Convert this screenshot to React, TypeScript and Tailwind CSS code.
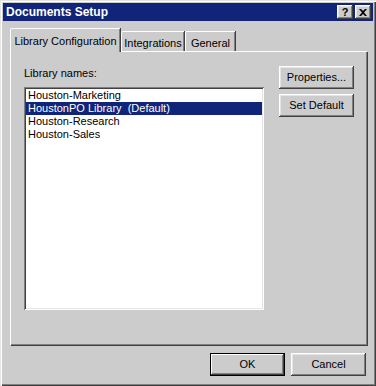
import React from 'react';

const raised =
  'shadow-[inset_-1px_-1px_#404040,inset_1px_1px_#ffffff,inset_-2px_-2px_#808080,inset_2px_2px_#e4e4e4]';
const sunken =
  'shadow-[inset_1px_1px_#808080,inset_-1px_-1px_#ffffff,inset_2px_2px_#404040,inset_-2px_-2px_#e4e4e4]';

const libraries = [
  'Houston-Marketing',
  'HoustonPO Library  (Default)',
  'Houston-Research',
  'Houston-Sales',
];

function Button({ label, primary = false }: { label: string; primary?: boolean }) {
  return (
    <button
      className={
        primary
          ? 'w-[75px] h-[23px] bg-[#cccccc] text-black border border-black shadow-[inset_-1px_-1px_#404040,inset_1px_1px_#ffffff,inset_-2px_-2px_#808080] flex items-center justify-center'
          : `w-[75px] h-[23px] bg-[#cccccc] text-black ${raised} flex items-center justify-center`
      }
    >
      {label}
    </button>
  );
}

function CaptionButton({ children }: { children: React.ReactNode }) {
  return (
    <div
      className={`w-[16px] h-[14px] bg-[#cccccc] ${raised} flex items-center justify-center text-black font-bold text-[11px] leading-none`}
    >
      {children}
    </div>
  );
}

export default function App() {
  return (
    <div className="w-[376px] h-[386px] bg-[#cccccc] p-[3px] flex flex-col font-['Liberation_Sans',Arial,sans-serif] text-[11px] text-black shadow-[inset_1px_1px_#e4e4e4,inset_2px_2px_#ffffff,inset_-1px_-1px_#404040,inset_-2px_-2px_#808080]">
      {/* Title Bar */}
      <div className="h-[18px] bg-[#10247a] flex items-center justify-between pl-[3px] pr-[2px]">
        <span className="text-white font-bold text-[12px] leading-none">Documents Setup</span>
        <div className="flex items-center gap-[2px]">
          <CaptionButton>?</CaptionButton>
          <CaptionButton>
            <svg width="8" height="7" viewBox="0 0 8 7">
              <path d="M0 0h2l2 2 2-2h2L5 3.5 8 7H6L4 5 2 7H0l3-3.5z" fill="#000" />
            </svg>
          </CaptionButton>
        </div>
      </div>

      {/* Body */}
      <div className="flex-1 flex flex-col px-[7px] pt-[7px]">
        {/* Tabs */}
        <div className="h-[23px] flex items-end">
          <div className="relative z-10 w-[110px] h-[24px] -mb-[1px] bg-[#cccccc] border-t border-l border-white rounded-tl-[2px] shadow-[inset_-1px_0_#808080,1px_0_#404040] flex items-start justify-center pt-[4px]">
            Library Configuration
          </div>
          <div className="ml-[1px] w-[63px] h-[20px] bg-[#cccccc] border-t border-l border-white rounded-tl-[2px] shadow-[inset_-1px_0_#808080,1px_0_#404040] flex items-start justify-center pt-[3px]">
            Integrations
          </div>
          <div className="ml-[1px] w-[50px] h-[20px] bg-[#cccccc] border-t border-l border-white rounded-tl-[2px] shadow-[inset_-1px_0_#808080,1px_0_#404040] flex items-start justify-center pt-[3px]">
            General
          </div>
        </div>

        {/* Panel */}
        <div className="w-[357px] h-[294px] border-t border-l border-white shadow-[inset_-1px_-1px_#808080,1px_1px_#404040] flex pl-[13px] pt-[14px] pr-[13px]">
          <div className="flex flex-col">
            <span className="h-[15px] leading-[15px]">Library names:</span>
            <div className={`mt-[6px] w-[240px] h-[223px] bg-white ${sunken} p-[2px]`}>
              {libraries.map((name, i) => (
                <div
                  key={name}
                  className={
                    i === 1
                      ? 'h-[13px] leading-[13px] px-[2px] bg-[#10247a] text-white whitespace-pre'
                      : 'h-[13px] leading-[13px] px-[2px] whitespace-pre'
                  }
                >
                  {name}
                </div>
              ))}
            </div>
          </div>
          <div className="ml-auto mt-[0px] flex flex-col gap-[5px]">
            <Button label="Properties..." />
            <Button label="Set Default" />
          </div>
        </div>

        {/* Footer buttons */}
        <div className="mt-[8px] flex justify-end gap-[6px] pr-[0px]">
          <Button label="OK" primary />
          <Button label="Cancel" />
        </div>
      </div>
    </div>
  );
}
